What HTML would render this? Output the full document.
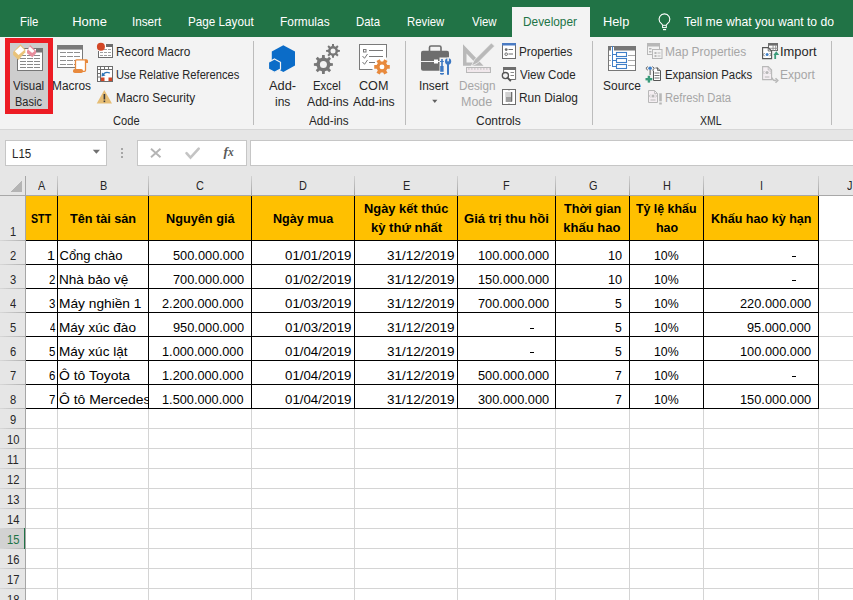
<!DOCTYPE html>
<html><head><meta charset="utf-8">
<style>
html,body{margin:0;padding:0;}
body{width:853px;height:600px;overflow:hidden;position:relative;background:#fff;font-family:"Liberation Sans",sans-serif;}
.b{position:absolute;}
.t{position:absolute;white-space:nowrap;transform-origin:0 0;font-family:"Liberation Sans",sans-serif;}
svg{position:absolute;left:0;top:0;}
</style></head><body>
<div class="b" style="left:0;top:0;width:853px;height:37px;background:#217346"></div>
<div class="b" style="left:512px;top:7px;width:78px;height:30px;background:#f3f3f3"></div>
<div class="b" style="left:0;top:37px;width:853px;height:92px;background:#f3f3f3"></div>
<div class="b" style="left:0;top:129px;width:853px;height:1px;background:#d6d6d6"></div>
<div class="b" style="left:0;top:130px;width:853px;height:66px;background:#e6e6e6"></div>
<div class="b" style="left:5px;top:140px;width:100px;height:24px;background:#fff;border:1px solid #c6c6c6"></div>
<div class="b" style="left:137px;top:140px;width:108px;height:24px;background:#fff;border:1px solid #c6c6c6"></div>
<div class="b" style="left:250px;top:140px;width:620px;height:24px;background:#fff;border:1px solid #c6c6c6"></div>
<div class="b" style="left:0;top:196px;width:25px;height:404px;background:#e6e6e6"></div>
<svg width="853" height="600" viewBox="0 0 853 600" shape-rendering="crispEdges">
<rect x="26" y="240" width="827" height="1" fill="#d4d4d4"/>
<rect x="26" y="264" width="827" height="1" fill="#d4d4d4"/>
<rect x="26" y="288" width="827" height="1" fill="#d4d4d4"/>
<rect x="26" y="312" width="827" height="1" fill="#d4d4d4"/>
<rect x="26" y="336" width="827" height="1" fill="#d4d4d4"/>
<rect x="26" y="360" width="827" height="1" fill="#d4d4d4"/>
<rect x="26" y="384" width="827" height="1" fill="#d4d4d4"/>
<rect x="26" y="408" width="827" height="1" fill="#d4d4d4"/>
<rect x="26" y="428" width="827" height="1" fill="#d4d4d4"/>
<rect x="26" y="448" width="827" height="1" fill="#d4d4d4"/>
<rect x="26" y="468" width="827" height="1" fill="#d4d4d4"/>
<rect x="26" y="488" width="827" height="1" fill="#d4d4d4"/>
<rect x="26" y="508" width="827" height="1" fill="#d4d4d4"/>
<rect x="26" y="528" width="827" height="1" fill="#d4d4d4"/>
<rect x="26" y="548" width="827" height="1" fill="#d4d4d4"/>
<rect x="26" y="568" width="827" height="1" fill="#d4d4d4"/>
<rect x="26" y="588" width="827" height="1" fill="#d4d4d4"/>
<rect x="26" y="608" width="827" height="1" fill="#d4d4d4"/>
<rect x="57" y="196" width="1" height="404" fill="#d4d4d4"/>
<rect x="148" y="196" width="1" height="404" fill="#d4d4d4"/>
<rect x="251" y="196" width="1" height="404" fill="#d4d4d4"/>
<rect x="354" y="196" width="1" height="404" fill="#d4d4d4"/>
<rect x="457" y="196" width="1" height="404" fill="#d4d4d4"/>
<rect x="555" y="196" width="1" height="404" fill="#d4d4d4"/>
<rect x="629" y="196" width="1" height="404" fill="#d4d4d4"/>
<rect x="703" y="196" width="1" height="404" fill="#d4d4d4"/>
<rect x="818" y="196" width="1" height="404" fill="#d4d4d4"/>
<rect x="0" y="240" width="25" height="1" fill="url(#rs)"/>
<rect x="0" y="264" width="25" height="1" fill="url(#rs)"/>
<rect x="0" y="288" width="25" height="1" fill="url(#rs)"/>
<rect x="0" y="312" width="25" height="1" fill="url(#rs)"/>
<rect x="0" y="336" width="25" height="1" fill="url(#rs)"/>
<rect x="0" y="360" width="25" height="1" fill="url(#rs)"/>
<rect x="0" y="384" width="25" height="1" fill="url(#rs)"/>
<rect x="0" y="408" width="25" height="1" fill="url(#rs)"/>
<rect x="0" y="428" width="25" height="1" fill="url(#rs)"/>
<rect x="0" y="448" width="25" height="1" fill="url(#rs)"/>
<rect x="0" y="468" width="25" height="1" fill="url(#rs)"/>
<rect x="0" y="488" width="25" height="1" fill="url(#rs)"/>
<rect x="0" y="508" width="25" height="1" fill="url(#rs)"/>
<rect x="0" y="528" width="25" height="1" fill="url(#rs)"/>
<rect x="0" y="548" width="25" height="1" fill="url(#rs)"/>
<rect x="0" y="568" width="25" height="1" fill="url(#rs)"/>
<rect x="0" y="588" width="25" height="1" fill="url(#rs)"/>
<rect x="0" y="608" width="25" height="1" fill="url(#rs)"/>
<rect x="0" y="529" width="24" height="19" fill="#d2d2d2"/>
<rect x="24" y="528" width="2" height="21" fill="#217346"/>
<rect x="25" y="176" width="1" height="424" fill="#a6a6a6"/>
<defs><linearGradient id="hs" x1="0" y1="0" x2="0" y2="1"><stop offset="0" stop-color="#d2d2d2"/><stop offset="1" stop-color="#a2a2a2"/></linearGradient><linearGradient id="rs" x1="0" y1="0" x2="1" y2="0"><stop offset="0" stop-color="#d8d8d8"/><stop offset="1" stop-color="#b0b0b0"/></linearGradient></defs>
<rect x="57" y="176" width="1" height="19" fill="url(#hs)"/>
<rect x="148" y="176" width="1" height="19" fill="url(#hs)"/>
<rect x="251" y="176" width="1" height="19" fill="url(#hs)"/>
<rect x="354" y="176" width="1" height="19" fill="url(#hs)"/>
<rect x="457" y="176" width="1" height="19" fill="url(#hs)"/>
<rect x="555" y="176" width="1" height="19" fill="url(#hs)"/>
<rect x="629" y="176" width="1" height="19" fill="url(#hs)"/>
<rect x="703" y="176" width="1" height="19" fill="url(#hs)"/>
<rect x="818" y="176" width="1" height="19" fill="url(#hs)"/>
<rect x="0" y="195" width="853" height="1" fill="#a8a8a8"/>
<polygon points="10.5,192 22,192 22,180.5" fill="#b4b4b4"/>
<rect x="26" y="196" width="792" height="44" fill="#ffc000"/>
<rect x="26" y="240" width="793" height="1" fill="#000"/>
<rect x="26" y="264" width="793" height="1" fill="#000"/>
<rect x="26" y="288" width="793" height="1" fill="#000"/>
<rect x="26" y="312" width="793" height="1" fill="#000"/>
<rect x="26" y="336" width="793" height="1" fill="#000"/>
<rect x="26" y="360" width="793" height="1" fill="#000"/>
<rect x="26" y="384" width="793" height="1" fill="#000"/>
<rect x="26" y="408" width="793" height="1" fill="#000"/>
<rect x="57" y="196" width="1" height="213" fill="#000"/>
<rect x="148" y="196" width="1" height="213" fill="#000"/>
<rect x="251" y="196" width="1" height="213" fill="#000"/>
<rect x="354" y="196" width="1" height="213" fill="#000"/>
<rect x="457" y="196" width="1" height="213" fill="#000"/>
<rect x="555" y="196" width="1" height="213" fill="#000"/>
<rect x="629" y="196" width="1" height="213" fill="#000"/>
<rect x="703" y="196" width="1" height="213" fill="#000"/>
<rect x="818" y="196" width="1" height="213" fill="#000"/>
</svg>
<svg width="853" height="600" viewBox="0 0 853 600">
<rect x="5" y="38" width="48" height="76" fill="#ed1c24"/>
<rect x="10" y="43" width="38" height="66" fill="#cdcdcd"/>
<rect x="17.5" y="48.5" width="25" height="22" fill="#fff" stroke="#767676" stroke-width="1"/>
<rect x="36" y="48" width="7" height="4.5" fill="#767676"/>
<rect x="20" y="55" width="6" height="1" fill="#8a8a8a"/>
<rect x="27" y="55" width="6" height="1" fill="#8a8a8a"/>
<rect x="34" y="55" width="6" height="1" fill="#8a8a8a"/>
<rect x="20" y="58" width="6" height="1" fill="#8a8a8a"/>
<rect x="27" y="58" width="6" height="1" fill="#8a8a8a"/>
<rect x="34" y="58" width="6" height="1" fill="#8a8a8a"/>
<rect x="20" y="61" width="6" height="1" fill="#8a8a8a"/>
<rect x="27" y="61" width="6" height="1" fill="#8a8a8a"/>
<rect x="34" y="61" width="6" height="1" fill="#8a8a8a"/>
<rect x="20" y="64" width="6" height="1" fill="#8a8a8a"/>
<rect x="27" y="64" width="6" height="1" fill="#8a8a8a"/>
<rect x="34" y="64" width="6" height="1" fill="#8a8a8a"/>
<rect x="20" y="67" width="6" height="1" fill="#8a8a8a"/>
<rect x="27" y="67" width="6" height="1" fill="#8a8a8a"/>
<rect x="34" y="67" width="6" height="1" fill="#8a8a8a"/>
<polygon points="20.5,44.3 25.3,49.4 25.3,52.2 18.5,60.1 13.1,55 13.1,51.9" fill="#e9c37a"/>
<polygon points="20.5,46 24.4,49.9 18.5,55 14.8,51.3" fill="#fff"/>
<polygon points="30.1,45.1 36.1,51.1 36.1,53.3 32.4,57.3 27,53.3 27,51.1" fill="#e78d9c"/>
<polygon points="29.8,46.5 34.6,51.1 32.1,53 28.1,49.4" fill="#fff"/>
<rect x="57.5" y="45.5" width="25" height="22" fill="#fff" stroke="#7a7a7a" stroke-width="1"/>
<rect x="57" y="45" width="26" height="4.6" fill="#7a7a7a"/>
<rect x="60" y="52" width="6" height="1" fill="#8f8f8f"/>
<rect x="67" y="52" width="6" height="1" fill="#8f8f8f"/>
<rect x="74" y="52" width="6" height="1" fill="#8f8f8f"/>
<rect x="60" y="56" width="6" height="1" fill="#8f8f8f"/>
<rect x="67" y="56" width="6" height="1" fill="#8f8f8f"/>
<rect x="74" y="56" width="6" height="1" fill="#8f8f8f"/>
<rect x="60" y="60" width="6" height="1" fill="#8f8f8f"/>
<rect x="67" y="60" width="6" height="1" fill="#8f8f8f"/>
<rect x="74" y="60" width="6" height="1" fill="#8f8f8f"/>
<rect x="60" y="64" width="6" height="1" fill="#8f8f8f"/>
<rect x="67" y="64" width="6" height="1" fill="#8f8f8f"/>
<rect x="74" y="64" width="6" height="1" fill="#8f8f8f"/>
<rect x="75.5" y="59.8" width="10" height="11.5" rx="1" fill="#fff" stroke="#e8893c" stroke-width="1.3"/>
<path d="M85,59.3 h1.5 a1.5,1.5 0 0 1 1.5,1.5 v2.2 h-3 z" fill="#e8893c"/>
<rect x="73" y="69" width="10" height="4" rx="1.8" fill="#e8893c"/>
<g shape-rendering="crispEdges"><rect x="98" y="44" width="15" height="14" fill="#fff"/>
<rect x="112" y="44" width="1" height="14" fill="#6d6d6d"/><rect x="98" y="57" width="15" height="1" fill="#6d6d6d"/><rect x="98" y="51" width="1" height="7" fill="#6d6d6d"/><rect x="106" y="44" width="7" height="3" fill="#6d6d6d"/>
<rect x="100" y="49" width="3" height="1" fill="#a0a0a0"/>
<rect x="104" y="49" width="3" height="1" fill="#a0a0a0"/>
<rect x="108" y="49" width="3" height="1" fill="#a0a0a0"/>
<rect x="100" y="52" width="3" height="1" fill="#a0a0a0"/>
<rect x="104" y="52" width="3" height="1" fill="#a0a0a0"/>
<rect x="108" y="52" width="3" height="1" fill="#a0a0a0"/>
<rect x="100" y="55" width="3" height="1" fill="#a0a0a0"/>
<rect x="104" y="55" width="3" height="1" fill="#a0a0a0"/>
<rect x="108" y="55" width="3" height="1" fill="#a0a0a0"/>
</g>
<circle cx="100.9" cy="46.8" r="4" fill="#d24726"/>
<rect x="97.5" y="66.5" width="15" height="15" fill="#fff" stroke="#6d6d6d"/>
<rect x="97" y="69" width="16" height="1" fill="#6d6d6d"/>
<rect x="97" y="73" width="3" height="1" fill="#6d6d6d"/>
<rect x="97" y="76.5" width="3" height="1" fill="#6d6d6d"/>
<rect x="100" y="66" width="1" height="16" fill="#6d6d6d"/>
<rect x="104" y="66" width="1" height="4" fill="#6d6d6d"/>
<rect x="108" y="66" width="1" height="4" fill="#6d6d6d"/>
<rect x="101" y="77.5" width="3.5" height="3.5" fill="#d24726"/>
<rect x="108.5" y="77.5" width="3.5" height="3.5" fill="#d24726"/>
<path d="M103,75 q2,-4 7,-2" stroke="#2e75b6" stroke-width="1.3" fill="none"/>
<polygon points="102,72.5 105.5,75.5 101.5,76.5" fill="#2e75b6"/>
<polygon points="104.3,90 112,103.6 96.7,103.6" fill="#e6bd74"/>
<rect x="103.6" y="94" width="1.6" height="5.5" fill="#3a3a3a"/>
<rect x="103.6" y="100.5" width="1.6" height="1.6" fill="#3a3a3a"/>
<rect x="253" y="41" width="1" height="84" fill="#bcbcbc"/>
<rect x="405" y="41" width="1" height="84" fill="#bcbcbc"/>
<rect x="592" y="41" width="1" height="84" fill="#bcbcbc"/>
<rect x="831" y="41" width="1" height="84" fill="#bcbcbc"/>
<polygon points="283.3,45.3 295,51.6 295,65.4 283.3,72 271.8,65.4 271.8,51.6" fill="#0b6cc8"/>
<polygon points="274.5,59 280.5,62.3 280.5,69.1 274.5,72.4 268.5,69.1 268.5,62.3" fill="#0b6cc8" stroke="#f3f3f3" stroke-width="1.2"/>
<polygon points="330.24,63.00 332.91,63.18 332.91,65.82 330.24,66.00 329.30,68.27 331.05,70.29 329.19,72.15 327.17,70.40 324.90,71.34 324.72,74.01 322.08,74.01 321.90,71.34 319.63,70.40 317.61,72.15 315.75,70.29 317.50,68.27 316.56,66.00 313.89,65.82 313.89,63.18 316.56,63.00 317.50,60.73 315.75,58.71 317.61,56.85 319.63,58.60 321.90,57.66 322.08,54.99 324.72,54.99 324.90,57.66 327.17,58.60 329.19,56.85 331.05,58.71 329.30,60.73" fill="#777777"/><circle cx="323.4" cy="64.5" r="3.5" fill="#f3f3f3"/>
<polygon points="337.88,49.83 339.93,49.94 339.93,51.86 337.88,51.97 337.21,53.60 338.58,55.12 337.22,56.48 335.70,55.11 334.07,55.78 333.96,57.83 332.04,57.83 331.93,55.78 330.30,55.11 328.78,56.48 327.42,55.12 328.79,53.60 328.12,51.97 326.07,51.86 326.07,49.94 328.12,49.83 328.79,48.20 327.42,46.68 328.78,45.32 330.30,46.69 331.93,46.02 332.04,43.97 333.96,43.97 334.07,46.02 335.70,46.69 337.22,45.32 338.58,46.68 337.21,48.20" fill="#777777"/><circle cx="333.0" cy="50.9" r="2.5" fill="#f3f3f3"/>
<rect x="359.5" y="44.5" width="27" height="25" fill="#fff" stroke="#7a7a7a"/>
<rect x="363.5" y="49.5" width="2.5" height="2.5" fill="none" stroke="#7a7a7a" stroke-width="1"/>
<rect x="369" y="50" width="14" height="1" fill="#7a7a7a"/>
<rect x="369" y="56" width="14" height="1" fill="#7a7a7a"/>
<rect x="369" y="62" width="6" height="1" fill="#7a7a7a"/>
<path d="M362.5,56 l2,2.3 l3,-4.3 M362.5,62 l2,2.3 l3,-4.3" stroke="#7a7a7a" stroke-width="1" fill="none"/>
<rect x="386" y="57.5" width="10" height="25" fill="#f3f3f3"/><rect x="372.5" y="69" width="20" height="10" fill="#f3f3f3"/>
<polygon points="387.31,65.11 389.78,65.03 389.78,68.77 387.31,68.69 386.20,70.60 387.51,72.70 384.27,74.57 383.11,72.39 380.89,72.39 379.73,74.57 376.49,72.70 377.80,70.60 376.69,68.69 374.22,68.77 374.22,65.03 376.69,65.11 377.80,63.20 376.49,61.10 379.73,59.23 380.89,61.41 383.11,61.41 384.27,59.23 387.51,61.10 386.20,63.20" fill="#e8893c"/><circle cx="382.0" cy="66.9" r="2.4" fill="#fff"/>
<path d="M429.5,51 v-3.5 a1.5,1.5 0 0 1 1.5,-1.5 h8.5 a1.5,1.5 0 0 1 1.5,1.5 v3.5" stroke="#6d6d6d" stroke-width="1.6" fill="none"/>
<rect x="421" y="50.8" width="28" height="20" rx="2" fill="#6d6d6d"/>
<rect x="421" y="61" width="28" height="1" fill="#f3f3f3"/>
<rect x="434" y="59.5" width="4" height="4" fill="#fff"/>
<rect x="439.5" y="57.5" width="12.5" height="17.5" fill="#f3f3f3"/>
<g fill="#3c78c3"><rect x="441.2" y="59" width="1.6" height="8"/><rect x="440" y="61" width="3.8" height="1"/><rect x="440.2" y="66" width="3.4" height="5.8"/><path d="M440,73 h4 v0.4 a2,1.4 0 0 1 -4,0 z"/><circle cx="448.1" cy="61.4" r="3.1"/><rect x="447" y="63" width="2" height="11.8"/></g>
<rect x="447.3" y="57.5" width="1.6" height="3.8" fill="#f3f3f3"/>
<polygon points="432.2,99.8 437.4,99.8 434.8,103" fill="#606060"/>
<path d="M463,44.3 L483.5,65.8 H463 Z M466.5,53.5 V62.5 H475 Z" fill="#b9b9b9" fill-rule="evenodd"/>
<polygon points="494.6,46.1 491.4,42.9 474.4,59.9 471.2,66.2 477.6,63.1" fill="#b9b9b9" stroke="#f3f3f3" stroke-width="0.8"/>
<rect x="466.5" y="67.5" width="24" height="5" fill="#f1e8ec" stroke="#b9b9b9"/>
<rect x="468.5" y="68" width="0.8" height="1.8" fill="#b9b9b9"/>
<rect x="471.5" y="68" width="0.8" height="1.8" fill="#b9b9b9"/>
<rect x="474.5" y="68" width="0.8" height="1.8" fill="#b9b9b9"/>
<rect x="477.5" y="68" width="0.8" height="1.8" fill="#b9b9b9"/>
<rect x="480.5" y="68" width="0.8" height="1.8" fill="#b9b9b9"/>
<rect x="483.5" y="68" width="0.8" height="1.8" fill="#b9b9b9"/>
<rect x="486.5" y="68" width="0.8" height="1.8" fill="#b9b9b9"/>
<rect x="489.5" y="68" width="0.8" height="1.8" fill="#b9b9b9"/>
<rect x="502.5" y="43.5" width="13" height="15" fill="#fff" stroke="#6d6d6d"/>
<rect x="502" y="43" width="14" height="2.5" fill="#4a7bc3"/>
<circle cx="506.2" cy="49.6" r="1.4" fill="#6d6d6d"/>
<circle cx="506.2" cy="54.2" r="1.3" fill="none" stroke="#6d6d6d" stroke-width="1"/>
<rect x="508.5" y="49" width="4.5" height="1" fill="#6d6d6d"/>
<rect x="508.5" y="53.5" width="4.5" height="1" fill="#6d6d6d"/>
<path d="M503.6,73 v-5.5 h12 v12 h-6" fill="#fff" stroke="#6d6d6d"/>
<rect x="503" y="67" width="13" height="3" fill="#6d6d6d"/>
<rect x="510.5" y="72" width="3.5" height="1" fill="#8a8a8a"/><rect x="510.5" y="75" width="3.5" height="1" fill="#8a8a8a"/>
<circle cx="505.4" cy="75.6" r="3.1" fill="#f3f3f3" stroke="#555" stroke-width="1.3"/>
<path d="M507.7,77.9 l2.6,2.6" stroke="#555" stroke-width="1.9" stroke-linecap="round"/>
<rect x="502.5" y="89.5" width="13" height="15" fill="#fff" stroke="#6d6d6d"/>
<rect x="505.7" y="92" width="6.3" height="10" fill="#a0a0a0"/>
<rect x="505.7" y="92" width="5.3" height="5" fill="#d2d2d2"/>
<rect x="511" y="92" width="1.3" height="9.5" fill="#6d6d6d"/>
<rect x="508.5" y="89" width="1" height="1.5" fill="#6d6d6d"/><rect x="508.5" y="103.5" width="1" height="1.5" fill="#6d6d6d"/>
<rect x="608.5" y="46.5" width="27" height="24" fill="#fff" stroke="#777"/>
<rect x="608" y="46" width="3" height="4.5" fill="#777"/><rect x="614" y="46" width="22" height="4.5" fill="#777"/>
<g shape-rendering="crispEdges">
<rect x="609" y="55" width="2" height="1" fill="#a8a8a8"/><rect x="628" y="55" width="7" height="1" fill="#a8a8a8"/>
<rect x="609" y="60" width="2" height="1" fill="#a8a8a8"/><rect x="628" y="60" width="7" height="1" fill="#a8a8a8"/>
<rect x="609" y="65" width="2" height="1" fill="#a8a8a8"/><rect x="628" y="65" width="7" height="1" fill="#a8a8a8"/>
<rect x="612" y="46" width="1" height="21" fill="#3f7fc8"/>
<rect x="612" y="54" width="5" height="1" fill="#3f7fc8"/>
<rect x="612" y="60" width="5" height="1" fill="#3f7fc8"/>
<rect x="612" y="66" width="5" height="1" fill="#3f7fc8"/>
</g>
<rect x="616.5" y="52.5" width="10" height="4" fill="#fff" stroke="#3f7fc8" stroke-width="1.1"/>
<rect x="616.5" y="58.5" width="10" height="4" fill="#fff" stroke="#3f7fc8" stroke-width="1.1"/>
<rect x="616.5" y="64.5" width="10" height="4" fill="#fff" stroke="#3f7fc8" stroke-width="1.1"/>
<rect x="647.5" y="43.5" width="12" height="11" fill="#f3f3f3" stroke="#b8b8b8"/>
<rect x="647" y="43" width="13" height="3.5" fill="#b8b8b8"/>
<rect x="649" y="48" width="2.5" height="1.5" fill="#b8b8b8"/><rect x="649" y="51" width="2.5" height="1.5" fill="#b8b8b8"/>
<rect x="652.5" y="49.5" width="9.5" height="9" fill="#f3f3f3" stroke="#b8b8b8"/>
<rect x="654.5" y="52" width="2" height="2" fill="#b8b8b8"/><rect x="657.5" y="52.5" width="3" height="1" fill="#b8b8b8"/><rect x="654.5" y="55" width="2" height="2" fill="#b8b8b8"/><rect x="657.5" y="55.5" width="3" height="1" fill="#b8b8b8"/>
<path d="M653.5,70.5 v10 h7 v-9.5 l-3,-3 h-2" fill="#fff" stroke="#555"/>
<path d="M657.5,67.5 v3 h3" fill="none" stroke="#555" stroke-width="0.8"/>
<rect x="654.5" y="72.5" width="5" height="1" fill="#777"/><rect x="654.5" y="75" width="5" height="1" fill="#777"/><rect x="654.5" y="77.5" width="5" height="1" fill="#777"/>
<path d="M647.8,66.6 l-1.9,1.8 l1.9,1.8 M652.4,66.6 l1.9,1.8 l-1.9,1.8" stroke="#444" stroke-width="0.9" fill="none"/>
<circle cx="650.1" cy="68.3" r="1.8" fill="#3f7fc8"/>
<rect x="649.6" y="70" width="1" height="5" fill="#555"/>
<rect x="645.5" y="78" width="6.8" height="2.4" fill="#3b9b7a"/><rect x="647.7" y="75.8" width="2.4" height="6.8" fill="#3b9b7a"/>
<path d="M648.5,90.5 h6 l3,3 v9 h-9 z" fill="#f4eef2" stroke="#b8b8b8"/>
<path d="M654.5,90.5 v3 h3" fill="none" stroke="#b8b8b8" stroke-width="0.8"/>
<path d="M650.8,94.5 l-1.5,1.5 l1.5,1.5 M655.2,94.5 l1.5,1.5 l-1.5,1.5" stroke="#b8b8b8" stroke-width="0.8" fill="none"/>
<circle cx="653" cy="96" r="1.5" fill="#b8b8b8"/>
<rect x="650.5" y="99.5" width="5" height="1" fill="#b8b8b8"/>
<rect x="659.2" y="93.3" width="2.6" height="8" fill="#b8b8b8"/><rect x="659.2" y="102.5" width="2.6" height="2" fill="#b8b8b8"/>
<rect x="768.5" y="43.5" width="9" height="7" fill="#fff" stroke="#6d6d6d"/>
<rect x="768" y="43" width="10" height="2.6" fill="#6d6d6d"/>
<rect x="768" y="47.8" width="10" height="0.9" fill="#8a8a8a"/><rect x="772.6" y="45" width="0.9" height="6" fill="#8a8a8a"/><rect x="775.3" y="45" width="0.9" height="6" fill="#8a8a8a"/>
<path d="M762.6,47.6 h5.6 l3.4,3.4 v7.6 h-9 z" fill="#fff" stroke="#555" stroke-width="1.1"/>
<path d="M768.2,47.6 v3.4 h3.4" fill="none" stroke="#555" stroke-width="0.8"/>
<path d="M764.6,53 l-1.4,1.6 l1.4,1.6 M769.6,53 l1.4,1.6 l-1.4,1.6" stroke="#555" stroke-width="0.8" fill="none"/>
<circle cx="767.1" cy="54.6" r="1.5" fill="#3f7fc8"/>
<path d="M775.2,59 v-4.5" stroke="#3b9b7a" stroke-width="1.8" fill="none"/>
<polygon points="776.3,51.2 779.2,55 773.4,55" fill="#3b9b7a"/>
<path d="M762.6,66.6 h5.6 l3.4,3.4 v9.6 h-9 z" fill="#f4eef2" stroke="#b8b8b8" stroke-width="1.1"/>
<path d="M768.2,66.6 v3.4 h3.4" fill="none" stroke="#b8b8b8" stroke-width="0.8"/>
<path d="M764.4,71 l-1.2,1.5 l1.2,1.5 M769.8,71 l1.2,1.5 l-1.2,1.5" stroke="#b8b8b8" stroke-width="0.8" fill="none"/>
<circle cx="767" cy="72.5" r="1.6" fill="#b8b8b8"/>
<rect x="764.8" y="76.5" width="4.6" height="1" fill="#b8b8b8"/>
<path d="M772,77.5 q0.5,3 3,3 h1.5" stroke="#b8b8b8" stroke-width="1.5" fill="none"/>
<path d="M775.5,78.3 l2.3,2.2 l-2.3,2.2" stroke="#b8b8b8" stroke-width="1.5" fill="none"/>
<polygon points="92.8,149.8 100,149.8 96.4,153.8" fill="#707070"/>
<rect x="121" y="148" width="2" height="2" fill="#a6a6a6"/>
<rect x="121" y="152" width="2" height="2" fill="#a6a6a6"/>
<rect x="121" y="156" width="2" height="2" fill="#a6a6a6"/>
<path d="M151,148.8 l9.5,8.5 M160.5,148.8 l-9.5,8.5" stroke="#b4b4b4" stroke-width="1.9"/>
<path d="M186.5,153.2 l4,4.4 l8.2,-9" stroke="#c4c4c4" stroke-width="2.6" fill="none" stroke-linecap="round"/>
<path d="M662.6,24.9 L659.66,21.8 A5.4,5.4 0 1 1 669.24,21.8 L666.3,24.9" fill="none" stroke="#fff" stroke-width="1.1"/>
<rect x="662.6" y="25.3" width="3.7" height="2.3" fill="none" stroke="#fff" stroke-width="1"/>
<rect x="663" y="29" width="3.1" height="1.2" fill="#fff"/>
</svg>
<span class="t" style="left:223.5px;top:144.5px;font-family:'Liberation Serif',serif;font-style:italic;font-size:13.5px;line-height:13px;color:#5a5a5a;font-weight:bold">f<span style="font-size:11.5px">x</span></span>
<span class="t" style="left:19.52px;top:15.00px;font-size:13px;line-height:13px;color:#ffffff;transform:scaleX(0.8800);">File</span>
<span class="t" style="left:72.20px;top:15.00px;font-size:13px;line-height:13px;color:#ffffff;">Home</span>
<span class="t" style="left:132.10px;top:15.00px;font-size:13px;line-height:13px;color:#ffffff;transform:scaleX(0.9000);">Insert</span>
<span class="t" style="left:188.30px;top:15.00px;font-size:13px;line-height:13px;color:#ffffff;transform:scaleX(0.9000);">Page Layout</span>
<span class="t" style="left:280.38px;top:15.00px;font-size:13px;line-height:13px;color:#ffffff;transform:scaleX(0.9151);">Formulas</span>
<span class="t" style="left:356.33px;top:15.00px;font-size:13px;line-height:13px;color:#ffffff;transform:scaleX(0.8741);">Data</span>
<span class="t" style="left:407.33px;top:15.00px;font-size:13px;line-height:13px;color:#ffffff;transform:scaleX(0.8714);">Review</span>
<span class="t" style="left:472.30px;top:15.00px;font-size:13px;line-height:13px;color:#ffffff;transform:scaleX(0.8786);">View</span>
<span class="t" style="left:523.39px;top:15.00px;font-size:13px;line-height:13px;color:#217346;transform:scaleX(0.9103);">Developer</span>
<span class="t" style="left:603.02px;top:15.00px;font-size:13px;line-height:13px;color:#ffffff;transform:scaleX(0.9840);">Help</span>
<span class="t" style="left:684.10px;top:15.00px;font-size:13px;line-height:13px;color:#ffffff;transform:scaleX(0.9350);">Tell me what you want to do</span>
<span class="t" style="left:13.30px;top:80.00px;font-size:12.5px;line-height:12.5px;color:#262626;transform:scaleX(0.9212);">Visual</span>
<span class="t" style="left:14.92px;top:96.00px;font-size:12.5px;line-height:12.5px;color:#262626;transform:scaleX(0.8793);">Basic</span>
<span class="t" style="left:52.05px;top:80.00px;font-size:12.5px;line-height:12.5px;color:#262626;transform:scaleX(0.9500);">Macros</span>
<span class="t" style="left:115.65px;top:46.00px;font-size:12.5px;line-height:12.5px;color:#262626;transform:scaleX(0.9468);">Record Macro</span>
<span class="t" style="left:115.71px;top:69.00px;font-size:12.5px;line-height:12.5px;color:#262626;transform:scaleX(0.8920);">Use Relative References</span>
<span class="t" style="left:115.65px;top:92.00px;font-size:12.5px;line-height:12.5px;color:#262626;transform:scaleX(0.9500);">Macro Security</span>
<span class="t" style="left:112.61px;top:115.00px;font-size:12.5px;line-height:12.5px;color:#262626;transform:scaleX(0.8897);">Code</span>
<span class="t" style="left:269.00px;top:80.00px;font-size:12.5px;line-height:12.5px;color:#262626;transform:scaleX(1.0269);">Add-</span>
<span class="t" style="left:274.64px;top:96.00px;font-size:12.5px;line-height:12.5px;color:#262626;transform:scaleX(0.9600);">ins</span>
<span class="t" style="left:313.49px;top:80.00px;font-size:12.5px;line-height:12.5px;color:#262626;transform:scaleX(0.9069);">Excel</span>
<span class="t" style="left:306.50px;top:96.00px;font-size:12.5px;line-height:12.5px;color:#262626;transform:scaleX(0.9833);">Add-ins</span>
<span class="t" style="left:359.39px;top:80.00px;font-size:12.5px;line-height:12.5px;color:#262626;transform:scaleX(1.0074);">COM</span>
<span class="t" style="left:353.40px;top:96.00px;font-size:12.5px;line-height:12.5px;color:#262626;transform:scaleX(0.9833);">Add-ins</span>
<span class="t" style="left:309.40px;top:115.00px;font-size:12.5px;line-height:12.5px;color:#262626;transform:scaleX(0.9333);">Add-ins</span>
<span class="t" style="left:419.45px;top:80.00px;font-size:12.5px;line-height:12.5px;color:#262626;transform:scaleX(0.9467);">Insert</span>
<span class="t" style="left:458.86px;top:80.00px;font-size:12.5px;line-height:12.5px;color:#a6a6a6;transform:scaleX(0.9378);">Design</span>
<span class="t" style="left:461.00px;top:96.00px;font-size:12.5px;line-height:12.5px;color:#a6a6a6;">Mode</span>
<span class="t" style="left:519.36px;top:46.00px;font-size:12.5px;line-height:12.5px;color:#262626;transform:scaleX(0.9375);">Properties</span>
<span class="t" style="left:520.30px;top:69.00px;font-size:12.5px;line-height:12.5px;color:#262626;transform:scaleX(0.9250);">View Code</span>
<span class="t" style="left:519.35px;top:92.00px;font-size:12.5px;line-height:12.5px;color:#262626;transform:scaleX(0.9533);">Run Dialog</span>
<span class="t" style="left:476.44px;top:115.00px;font-size:12.5px;line-height:12.5px;color:#262626;transform:scaleX(0.9622);">Controls</span>
<span class="t" style="left:602.94px;top:80.00px;font-size:12.5px;line-height:12.5px;color:#262626;transform:scaleX(0.9579);">Source</span>
<span class="t" style="left:664.54px;top:46.00px;font-size:12.5px;line-height:12.5px;color:#a6a6a6;transform:scaleX(0.9578);">Map Properties</span>
<span class="t" style="left:664.59px;top:69.00px;font-size:12.5px;line-height:12.5px;color:#262626;transform:scaleX(0.9095);">Expansion Packs</span>
<span class="t" style="left:664.60px;top:92.00px;font-size:12.5px;line-height:12.5px;color:#a6a6a6;transform:scaleX(0.8959);">Refresh Data</span>
<span class="t" style="left:780.17px;top:46.00px;font-size:12.5px;line-height:12.5px;color:#262626;transform:scaleX(1.0314);">Import</span>
<span class="t" style="left:780.23px;top:69.00px;font-size:12.5px;line-height:12.5px;color:#a6a6a6;transform:scaleX(0.9657);">Export</span>
<span class="t" style="left:700.16px;top:115.00px;font-size:12.5px;line-height:12.5px;color:#262626;transform:scaleX(0.8400);">XML</span>
<span class="t" style="left:11.57px;top:148.00px;font-size:12.5px;line-height:12.5px;color:#262626;transform:scaleX(0.9250);">L15</span>
<span class="t" style="left:38.22px;top:179.00px;font-size:13px;line-height:13px;color:#262626;transform:scaleX(0.8400);">A</span>
<span class="t" style="left:99.72px;top:179.00px;font-size:13px;line-height:13px;color:#262626;transform:scaleX(0.8400);">B</span>
<span class="t" style="left:196.30px;top:179.00px;font-size:13px;line-height:13px;color:#262626;transform:scaleX(0.8400);">C</span>
<span class="t" style="left:299.30px;top:179.00px;font-size:13px;line-height:13px;color:#262626;transform:scaleX(0.8400);">D</span>
<span class="t" style="left:402.72px;top:179.00px;font-size:13px;line-height:13px;color:#262626;transform:scaleX(0.8400);">E</span>
<span class="t" style="left:503.22px;top:179.00px;font-size:13px;line-height:13px;color:#262626;transform:scaleX(0.8400);">F</span>
<span class="t" style="left:588.80px;top:179.00px;font-size:13px;line-height:13px;color:#262626;transform:scaleX(0.8400);">G</span>
<span class="t" style="left:662.80px;top:179.00px;font-size:13px;line-height:13px;color:#262626;transform:scaleX(0.8400);">H</span>
<span class="t" style="left:759.82px;top:179.00px;font-size:13px;line-height:13px;color:#262626;transform:scaleX(0.8400);">I</span>
<span class="t" style="left:847.48px;top:179.00px;font-size:13px;line-height:13px;color:#262626;transform:scaleX(0.8400);">J</span>
<span class="t" style="left:9.66px;top:225.00px;font-size:13px;line-height:13px;color:#262626;transform:scaleX(0.8600);">1</span>
<span class="t" style="left:9.66px;top:249.00px;font-size:13px;line-height:13px;color:#262626;transform:scaleX(0.8600);">2</span>
<span class="t" style="left:9.66px;top:273.00px;font-size:13px;line-height:13px;color:#262626;transform:scaleX(0.8600);">3</span>
<span class="t" style="left:10.09px;top:297.00px;font-size:13px;line-height:13px;color:#262626;transform:scaleX(0.8600);">4</span>
<span class="t" style="left:9.66px;top:321.00px;font-size:13px;line-height:13px;color:#262626;transform:scaleX(0.8600);">5</span>
<span class="t" style="left:9.66px;top:345.00px;font-size:13px;line-height:13px;color:#262626;transform:scaleX(0.8600);">6</span>
<span class="t" style="left:9.66px;top:369.00px;font-size:13px;line-height:13px;color:#262626;transform:scaleX(0.8600);">7</span>
<span class="t" style="left:9.66px;top:393.00px;font-size:13px;line-height:13px;color:#262626;transform:scaleX(0.8600);">8</span>
<span class="t" style="left:9.66px;top:413.00px;font-size:13px;line-height:13px;color:#262626;transform:scaleX(0.8600);">9</span>
<span class="t" style="left:6.65px;top:433.00px;font-size:13px;line-height:13px;color:#262626;transform:scaleX(0.8600);">10</span>
<span class="t" style="left:7.08px;top:453.00px;font-size:13px;line-height:13px;color:#262626;transform:scaleX(0.8600);">11</span>
<span class="t" style="left:6.65px;top:473.00px;font-size:13px;line-height:13px;color:#262626;transform:scaleX(0.8600);">12</span>
<span class="t" style="left:6.65px;top:493.00px;font-size:13px;line-height:13px;color:#262626;transform:scaleX(0.8600);">13</span>
<span class="t" style="left:6.65px;top:513.00px;font-size:13px;line-height:13px;color:#262626;transform:scaleX(0.8600);">14</span>
<span class="t" style="left:6.65px;top:533.00px;font-size:13px;line-height:13px;color:#217346;transform:scaleX(0.8600);">15</span>
<span class="t" style="left:6.65px;top:553.00px;font-size:13px;line-height:13px;color:#262626;transform:scaleX(0.8600);">16</span>
<span class="t" style="left:6.65px;top:573.00px;font-size:13px;line-height:13px;color:#262626;transform:scaleX(0.8600);">17</span>
<span class="t" style="left:6.65px;top:593.00px;font-size:13px;line-height:13px;color:#262626;transform:scaleX(0.8600);">18</span>
<span class="t" style="left:30.88px;top:212.00px;font-size:13px;line-height:13px;color:#000000;font-weight:700;transform:scaleX(0.8208);">STT</span>
<span class="t" style="left:70.30px;top:212.00px;font-size:13px;line-height:13px;color:#000000;font-weight:700;transform:scaleX(0.9731);">Tên tài sản</span>
<span class="t" style="left:166.02px;top:212.00px;font-size:13px;line-height:13px;color:#000000;font-weight:700;transform:scaleX(0.9783);">Nguyên giá</span>
<span class="t" style="left:272.63px;top:212.00px;font-size:13px;line-height:13px;color:#000000;font-weight:700;transform:scaleX(0.9677);">Ngày mua</span>
<span class="t" style="left:363.81px;top:202.00px;font-size:13px;line-height:13px;color:#000000;font-weight:700;transform:scaleX(0.9893);">Ngày kết thúc</span>
<span class="t" style="left:370.60px;top:221.00px;font-size:13px;line-height:13px;color:#000000;font-weight:700;transform:scaleX(1.0029);">kỳ thứ nhất</span>
<span class="t" style="left:464.40px;top:212.00px;font-size:13px;line-height:13px;color:#000000;font-weight:700;transform:scaleX(1.0036);">Giá trị thu hồi</span>
<span class="t" style="left:563.70px;top:202.00px;font-size:13px;line-height:13px;color:#000000;font-weight:700;transform:scaleX(0.9695);">Thời gian</span>
<span class="t" style="left:563.30px;top:221.00px;font-size:13px;line-height:13px;color:#000000;font-weight:700;">khấu hao</span>
<span class="t" style="left:636.40px;top:202.00px;font-size:13px;line-height:13px;color:#000000;font-weight:700;transform:scaleX(0.9508);">Tỷ lệ khấu</span>
<span class="t" style="left:655.64px;top:221.00px;font-size:13px;line-height:13px;color:#000000;font-weight:700;transform:scaleX(0.9591);">hao</span>
<span class="t" style="left:710.93px;top:212.00px;font-size:13px;line-height:13px;color:#000000;font-weight:700;transform:scaleX(0.9657);">Khấu hao kỳ hạn</span>
<span class="t" style="left:47.30px;top:249.00px;font-size:13px;line-height:13px;color:#000000;transform:scaleX(1.1000);">1</span>
<span class="t" style="left:59.50px;top:249.00px;font-size:13px;line-height:13px;color:#000000;">Cổng chào</span>
<span class="t" style="left:172.73px;top:249.00px;font-size:13px;line-height:13px;color:#000000;transform:scaleX(0.9844);">500.000.000</span>
<span class="t" style="left:477.53px;top:249.00px;font-size:13px;line-height:13px;color:#000000;transform:scaleX(0.9844);">100.000.000</span>
<div style="position:absolute;left:792px;top:256px;width:4px;height:1px;background:#000000"></div>
<span class="t" style="left:284.94px;top:249.00px;font-size:13px;line-height:13px;color:#000000;transform:scaleX(1.0209);">01/01/2019</span>
<span class="t" style="left:387.00px;top:249.00px;font-size:13px;line-height:13px;color:#000000;transform:scaleX(1.0369);">31/12/2019</span>
<span class="t" style="left:608.02px;top:249.00px;font-size:13px;line-height:13px;color:#000000;transform:scaleX(0.9769);">10</span>
<span class="t" style="left:653.75px;top:249.00px;font-size:13px;line-height:13px;color:#000000;transform:scaleX(0.9480);">10%</span>
<span class="t" style="left:48.85px;top:273.00px;font-size:13px;line-height:13px;color:#000000;transform:scaleX(0.8783);">2</span>
<span class="t" style="left:59.46px;top:273.00px;font-size:13px;line-height:13px;color:#000000;transform:scaleX(1.0431);">Nhà bảo vệ</span>
<span class="t" style="left:172.73px;top:273.00px;font-size:13px;line-height:13px;color:#000000;transform:scaleX(0.9844);">700.000.000</span>
<span class="t" style="left:477.53px;top:273.00px;font-size:13px;line-height:13px;color:#000000;transform:scaleX(0.9844);">150.000.000</span>
<div style="position:absolute;left:792px;top:280px;width:4px;height:1px;background:#000000"></div>
<span class="t" style="left:284.94px;top:273.00px;font-size:13px;line-height:13px;color:#000000;transform:scaleX(1.0209);">01/02/2019</span>
<span class="t" style="left:387.00px;top:273.00px;font-size:13px;line-height:13px;color:#000000;transform:scaleX(1.0369);">31/12/2019</span>
<span class="t" style="left:608.02px;top:273.00px;font-size:13px;line-height:13px;color:#000000;transform:scaleX(0.9769);">10</span>
<span class="t" style="left:653.75px;top:273.00px;font-size:13px;line-height:13px;color:#000000;transform:scaleX(0.9480);">10%</span>
<span class="t" style="left:48.85px;top:297.00px;font-size:13px;line-height:13px;color:#000000;transform:scaleX(0.8783);">3</span>
<span class="t" style="left:59.44px;top:297.00px;font-size:13px;line-height:13px;color:#000000;transform:scaleX(1.0558);">Máy nghiền 1</span>
<span class="t" style="left:162.23px;top:297.00px;font-size:13px;line-height:13px;color:#000000;transform:scaleX(0.9804);">2.200.000.000</span>
<span class="t" style="left:477.53px;top:297.00px;font-size:13px;line-height:13px;color:#000000;transform:scaleX(0.9844);">700.000.000</span>
<span class="t" style="left:739.73px;top:297.00px;font-size:13px;line-height:13px;color:#000000;transform:scaleX(0.9844);">220.000.000</span>
<span class="t" style="left:284.94px;top:297.00px;font-size:13px;line-height:13px;color:#000000;transform:scaleX(1.0209);">01/03/2019</span>
<span class="t" style="left:387.00px;top:297.00px;font-size:13px;line-height:13px;color:#000000;transform:scaleX(1.0369);">31/12/2019</span>
<span class="t" style="left:615.17px;top:297.00px;font-size:13px;line-height:13px;color:#000000;transform:scaleX(0.9333);">5</span>
<span class="t" style="left:653.75px;top:297.00px;font-size:13px;line-height:13px;color:#000000;transform:scaleX(0.9480);">10%</span>
<span class="t" style="left:49.73px;top:321.00px;font-size:13px;line-height:13px;color:#000000;transform:scaleX(0.7529);">4</span>
<span class="t" style="left:59.46px;top:321.00px;font-size:13px;line-height:13px;color:#000000;transform:scaleX(1.0444);">Máy xúc đào</span>
<span class="t" style="left:172.73px;top:321.00px;font-size:13px;line-height:13px;color:#000000;transform:scaleX(0.9844);">950.000.000</span>
<div style="position:absolute;left:530px;top:328px;width:4px;height:1px;background:#000000"></div>
<span class="t" style="left:746.80px;top:321.00px;font-size:13px;line-height:13px;color:#000000;transform:scaleX(0.9816);">95.000.000</span>
<span class="t" style="left:284.94px;top:321.00px;font-size:13px;line-height:13px;color:#000000;transform:scaleX(1.0209);">01/03/2019</span>
<span class="t" style="left:387.00px;top:321.00px;font-size:13px;line-height:13px;color:#000000;transform:scaleX(1.0369);">31/12/2019</span>
<span class="t" style="left:615.17px;top:321.00px;font-size:13px;line-height:13px;color:#000000;transform:scaleX(0.9333);">5</span>
<span class="t" style="left:653.75px;top:321.00px;font-size:13px;line-height:13px;color:#000000;transform:scaleX(0.9480);">10%</span>
<span class="t" style="left:48.85px;top:345.00px;font-size:13px;line-height:13px;color:#000000;transform:scaleX(0.8783);">5</span>
<span class="t" style="left:59.46px;top:345.00px;font-size:13px;line-height:13px;color:#000000;transform:scaleX(1.0415);">Máy xúc lật</span>
<span class="t" style="left:162.23px;top:345.00px;font-size:13px;line-height:13px;color:#000000;transform:scaleX(0.9804);">1.000.000.000</span>
<div style="position:absolute;left:530px;top:352px;width:4px;height:1px;background:#000000"></div>
<span class="t" style="left:739.73px;top:345.00px;font-size:13px;line-height:13px;color:#000000;transform:scaleX(0.9844);">100.000.000</span>
<span class="t" style="left:284.94px;top:345.00px;font-size:13px;line-height:13px;color:#000000;transform:scaleX(1.0209);">01/04/2019</span>
<span class="t" style="left:387.00px;top:345.00px;font-size:13px;line-height:13px;color:#000000;transform:scaleX(1.0369);">31/12/2019</span>
<span class="t" style="left:615.17px;top:345.00px;font-size:13px;line-height:13px;color:#000000;transform:scaleX(0.9333);">5</span>
<span class="t" style="left:653.75px;top:345.00px;font-size:13px;line-height:13px;color:#000000;transform:scaleX(0.9480);">10%</span>
<span class="t" style="left:48.85px;top:369.00px;font-size:13px;line-height:13px;color:#000000;transform:scaleX(0.8783);">6</span>
<span class="t" style="left:59.43px;top:369.00px;font-size:13px;line-height:13px;color:#000000;transform:scaleX(1.0723);">Ô tô Toyota</span>
<span class="t" style="left:162.23px;top:369.00px;font-size:13px;line-height:13px;color:#000000;transform:scaleX(0.9804);">1.200.000.000</span>
<span class="t" style="left:477.53px;top:369.00px;font-size:13px;line-height:13px;color:#000000;transform:scaleX(0.9844);">500.000.000</span>
<div style="position:absolute;left:792px;top:376px;width:4px;height:1px;background:#000000"></div>
<span class="t" style="left:284.94px;top:369.00px;font-size:13px;line-height:13px;color:#000000;transform:scaleX(1.0209);">01/04/2019</span>
<span class="t" style="left:387.00px;top:369.00px;font-size:13px;line-height:13px;color:#000000;transform:scaleX(1.0369);">31/12/2019</span>
<span class="t" style="left:615.17px;top:369.00px;font-size:13px;line-height:13px;color:#000000;transform:scaleX(0.9333);">7</span>
<span class="t" style="left:653.75px;top:369.00px;font-size:13px;line-height:13px;color:#000000;transform:scaleX(0.9480);">10%</span>
<span class="t" style="left:48.85px;top:393.00px;font-size:13px;line-height:13px;color:#000000;transform:scaleX(0.8783);">7</span>
<div style="position:absolute;left:0;top:0;width:148.0px;height:600px;overflow:hidden"><span class="t" style="left:59.43px;top:393.00px;font-size:13px;line-height:13px;color:#000000;transform:scaleX(1.0723);">Ô tô Mercedes</span></div>
<span class="t" style="left:162.23px;top:393.00px;font-size:13px;line-height:13px;color:#000000;transform:scaleX(0.9804);">1.500.000.000</span>
<span class="t" style="left:477.53px;top:393.00px;font-size:13px;line-height:13px;color:#000000;transform:scaleX(0.9844);">300.000.000</span>
<span class="t" style="left:739.73px;top:393.00px;font-size:13px;line-height:13px;color:#000000;transform:scaleX(0.9844);">150.000.000</span>
<span class="t" style="left:284.94px;top:393.00px;font-size:13px;line-height:13px;color:#000000;transform:scaleX(1.0209);">01/04/2019</span>
<span class="t" style="left:387.00px;top:393.00px;font-size:13px;line-height:13px;color:#000000;transform:scaleX(1.0369);">31/12/2019</span>
<span class="t" style="left:615.17px;top:393.00px;font-size:13px;line-height:13px;color:#000000;transform:scaleX(0.9333);">7</span>
<span class="t" style="left:653.75px;top:393.00px;font-size:13px;line-height:13px;color:#000000;transform:scaleX(0.9480);">10%</span>
</body></html>
